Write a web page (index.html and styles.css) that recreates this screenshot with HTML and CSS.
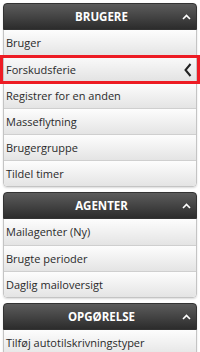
FILE: index.html
```html
<!DOCTYPE html>
<html lang="da">
<head>
  <meta charset="UTF-8">
  <meta name="viewport" content="width=device-width, initial-scale=1.0">
  <title>Menu</title>
  <link rel="stylesheet" href="styles.css">
</head>
<body>
  <div class="menu">
    <div class="panel">
      <div class="panel-head">
        <span class="panel-title">BRUGERE</span>
        <svg class="chev-up" width="9" height="6" viewBox="0 0 9 6"><path d="M1 5 L4.5 1.5 L8 5" fill="none" stroke="#fff" stroke-width="1.6"/></svg>
      </div>
      <div class="item">Bruger</div>
      <div class="item active">Forskudsferie
        <svg class="chev-left" width="8" height="14" viewBox="0 0 8 14"><path d="M6.5 1 L1.5 7 L6.5 13" fill="none" stroke="#222" stroke-width="2"/></svg>
      </div>
      <div class="item">Registrer for en anden</div>
      <div class="item">Masseflytning</div>
      <div class="item">Brugergruppe</div>
      <div class="item">Tildel timer</div>
    </div>

    <div class="panel">
      <div class="panel-head">
        <span class="panel-title">AGENTER</span>
        <svg class="chev-up" width="9" height="6" viewBox="0 0 9 6"><path d="M1 5 L4.5 1.5 L8 5" fill="none" stroke="#fff" stroke-width="1.6"/></svg>
      </div>
      <div class="item">Mailagenter (Ny)</div>
      <div class="item">Brugte perioder</div>
      <div class="item">Daglig mailoversigt</div>
    </div>

    <div class="panel">
      <div class="panel-head">
        <span class="panel-title">OPGØRELSE</span>
        <svg class="chev-up" width="9" height="6" viewBox="0 0 9 6"><path d="M1 5 L4.5 1.5 L8 5" fill="none" stroke="#fff" stroke-width="1.6"/></svg>
      </div>
      <div class="item">Tilføj autotilskrivningstyper</div>
    </div>
  </div>
</body>
</html>
```
FILE: styles.css
```css
body {
  margin: 0;
  background: #fff;
  font-family: "Open Sans", "Noto Sans", sans-serif;
  font-size: 11px;
  color: #2a2a2a;
}
.menu {
  padding: 3px;
  display: flex;
  flex-direction: column;
  gap: 5px;
}
.panel {
  border: 1px solid #c4c4c4;
  border-radius: 4px;
  box-shadow: 0 1px 2px rgba(0, 0, 0, 0.15);
}
.panel-head {
  position: relative;
  height: 25px;
  display: flex;
  align-items: center;
  justify-content: center;
  background: linear-gradient(#5c5c5c, #2c2c2c);
  border: 1px solid #333;
  margin: -1px -1px 0;
  border-radius: 4px 4px 0 0;
  color: #fff;
}
.panel-title {
  font-weight: bold;
  font-size: 11.5px;
  padding-left: 3px;
}
.chev-up {
  position: absolute;
  right: 5px;
  top: 10px;
}
.item {
  position: relative;
  height: 25px;
  line-height: 25px;
  padding-left: 2px;
  border-top: 1px solid #cfcfcf;
  background: linear-gradient(#fdfdfd, #e4e4e4);
  white-space: nowrap;
}
.panel-head + .item {
  border-top: none;
  height: 26px;
  line-height: 26px;
}
.item:last-child {
  border-radius: 0 0 4px 4px;
}
.item.active {
  z-index: 1;
  background: linear-gradient(#fafafa, #e2e2e2);
}
.item.active::after {
  content: "";
  position: absolute;
  left: -4px;
  right: -4px;
  top: -2px;
  bottom: -2px;
  border: 3px solid #ed1c24;
}
.chev-left {
  position: absolute;
  right: 4px;
  top: 6px;
}
```
